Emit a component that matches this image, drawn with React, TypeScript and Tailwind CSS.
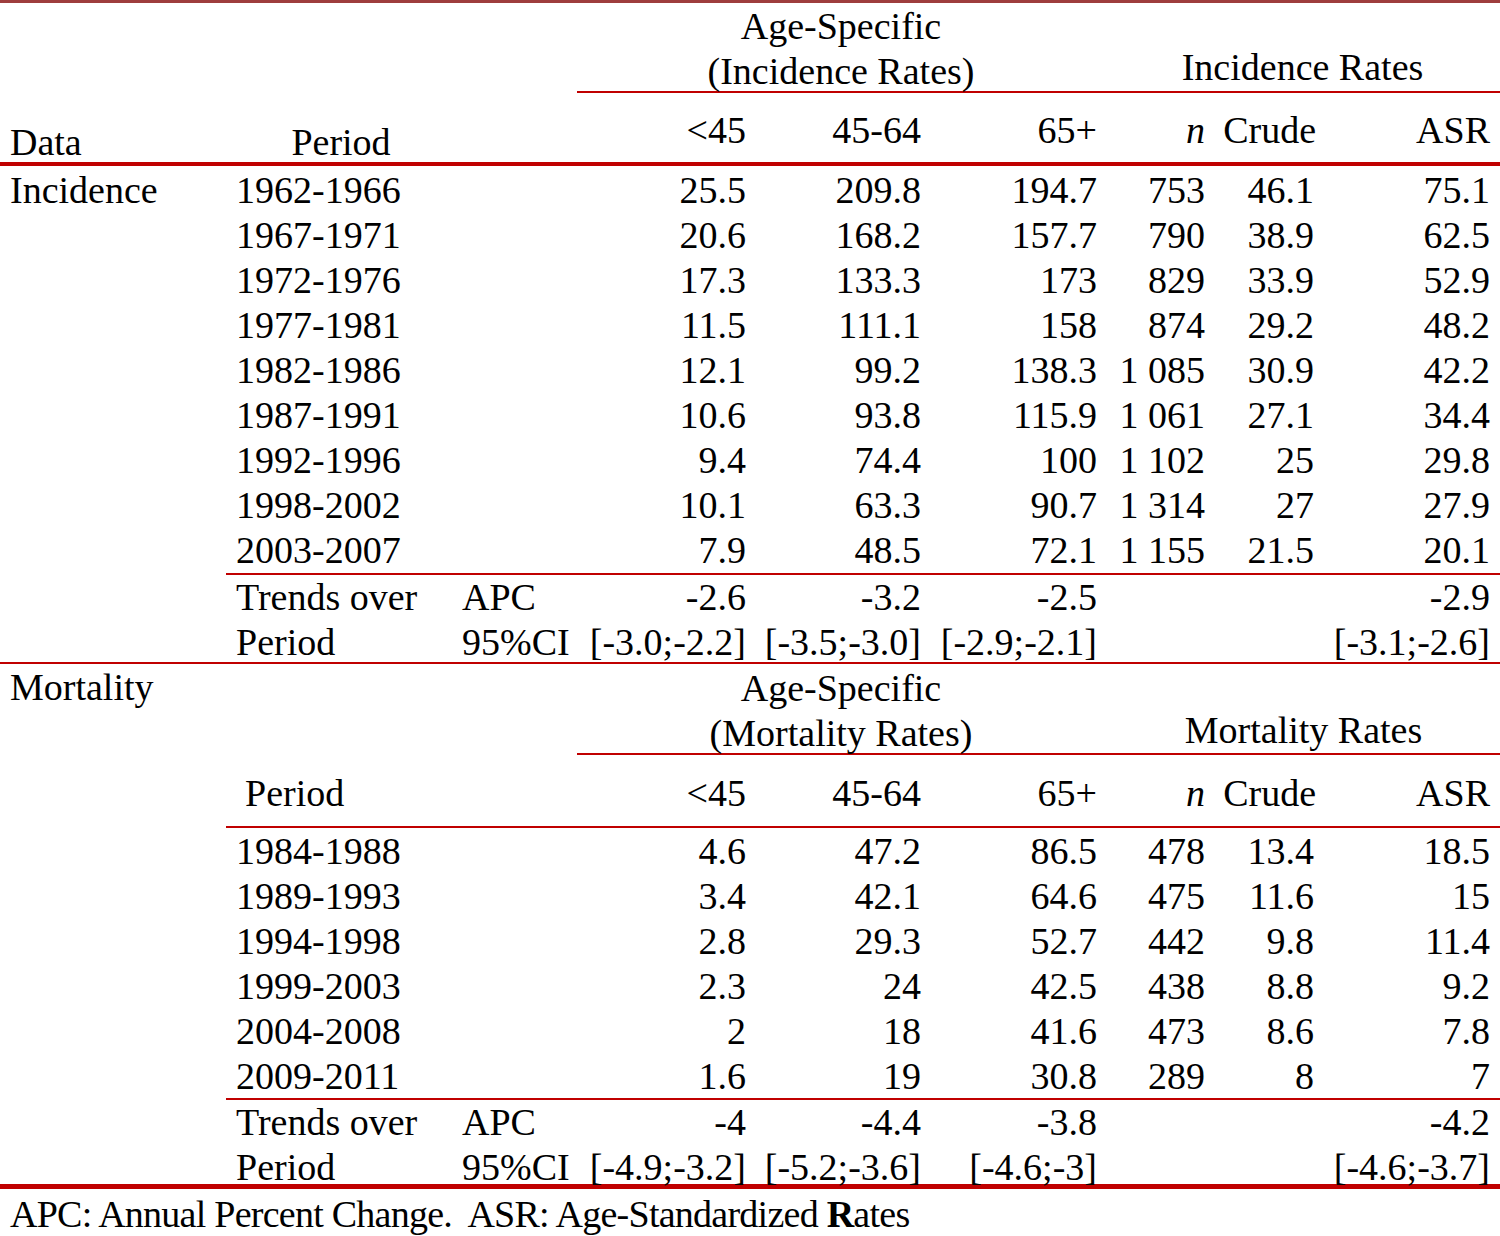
import React from "react";

const COLS =
  "grid grid-cols-[226px_226px_125px_177px_175px_176px_108px_109px_178px]";

type Vals = [string, string, string, string, string, string];

const incidence: [string, Vals][] = [
  ["1962-1966", ["25.5", "209.8", "194.7", "753", "46.1", "75.1"]],
  ["1967-1971", ["20.6", "168.2", "157.7", "790", "38.9", "62.5"]],
  ["1972-1976", ["17.3", "133.3", "173", "829", "33.9", "52.9"]],
  ["1977-1981", ["11.5", "111.1", "158", "874", "29.2", "48.2"]],
  ["1982-1986", ["12.1", "99.2", "138.3", "1 085", "30.9", "42.2"]],
  ["1987-1991", ["10.6", "93.8", "115.9", "1 061", "27.1", "34.4"]],
  ["1992-1996", ["9.4", "74.4", "100", "1 102", "25", "29.8"]],
  ["1998-2002", ["10.1", "63.3", "90.7", "1 314", "27", "27.9"]],
  ["2003-2007", ["7.9", "48.5", "72.1", "1 155", "21.5", "20.1"]],
];

const mortality: [string, Vals][] = [
  ["1984-1988", ["4.6", "47.2", "86.5", "478", "13.4", "18.5"]],
  ["1989-1993", ["3.4", "42.1", "64.6", "475", "11.6", "15"]],
  ["1994-1998", ["2.8", "29.3", "52.7", "442", "9.8", "11.4"]],
  ["1999-2003", ["2.3", "24", "42.5", "438", "8.8", "9.2"]],
  ["2004-2008", ["2", "18", "41.6", "473", "8.6", "7.8"]],
  ["2009-2011", ["1.6", "19", "30.8", "289", "8", "7"]],
];

function ValueCells({ vals }: { vals: string[] }) {
  return (
    <>
      {vals.map((v, i) => (
        <div
          key={i}
          className={
            i === 5
              ? "text-right pr-[10px] whitespace-nowrap"
              : "text-right pr-[8px] whitespace-nowrap"
          }
        >
          {v}
        </div>
      ))}
    </>
  );
}

function Row({
  first,
  second,
  third,
  vals,
  h,
}: {
  first?: string;
  second?: string;
  third?: string;
  vals: string[];
  h: string;
}) {
  return (
    <div className={`${COLS} ${h}`}>
      <div className="pl-[10px] whitespace-nowrap">{first}</div>
      <div className="pl-[10px] whitespace-nowrap">{second}</div>
      <div className="pl-[10px] whitespace-nowrap">{third}</div>
      <ValueCells vals={vals} />
    </div>
  );
}

function RedRule({ cls }: { cls: string }) {
  return <div className={cls} />;
}

export default function App() {
  return (
    <div className="w-[1500px] h-[1236px] bg-white text-black text-[38px] leading-[45px] font-['Liberation_Serif',serif] overflow-hidden">
      <div className="h-[3px] bg-[#9e3d3d]" />

      {/* Incidence header A */}
      <div className={`${COLS} h-[88px]`}>
        <div className="col-span-3" />
        <div className="col-span-3 text-center pt-[1px]">
          <div>Age-Specific</div>
          <div>(Incidence Rates)</div>
        </div>
        <div className="col-span-3 text-center pt-[42px]">Incidence Rates</div>
      </div>
      <RedRule cls="h-[2px] ml-[577px] bg-[#c00000]" />

      {/* Incidence header B */}
      <div className={`${COLS} h-[69px]`}>
        <div className="pl-[10px] pt-[27px]">Data</div>
        <div className="text-center pt-[27px] pl-[4px]">Period</div>
        <div />
        <div className="text-right pr-[8px] pt-[15px]">&lt;45</div>
        <div className="text-right pr-[8px] pt-[15px]">45-64</div>
        <div className="text-right pr-[8px] pt-[15px]">65+</div>
        <div className="text-right pr-[8px] pt-[15px] italic">n</div>
        <div className="text-right pr-[6px] pt-[15px]">Crude</div>
        <div className="text-right pr-[10px] pt-[15px]">ASR</div>
      </div>
      <RedRule cls="h-[4px] bg-[#c00000]" />

      {/* Incidence rows */}
      <div className="h-[407px] pt-[2px]">
        {incidence.map(([p, v], i) => (
          <Row
            key={p}
            first={i === 0 ? "Incidence" : undefined}
            second={p}
            vals={v}
            h="h-[45px]"
          />
        ))}
      </div>
      <RedRule cls="h-[2px] ml-[226px] bg-[#c00000]" />
      <div className="h-[87px]">
        <Row second="Trends over" third="APC" vals={["-2.6", "-3.2", "-2.5", "", "", "-2.9"]} h="h-[45px]" />
        <Row
          second="Period"
          third="95%CI"
          vals={["[-3.0;-2.2]", "[-3.5;-3.0]", "[-2.9;-2.1]", "", "", "[-3.1;-2.6]"]}
          h="h-[42px]"
        />
      </div>
      <RedRule cls="h-[2px] bg-[#c00000]" />

      {/* Mortality header A */}
      <div className={`${COLS} h-[89px]`}>
        <div className="pl-[10px] pt-[1px]">Mortality</div>
        <div className="col-span-2" />
        <div className="col-span-3 text-center pt-[2px]">
          <div>Age-Specific</div>
          <div>(Mortality Rates)</div>
        </div>
        <div className="col-span-3 text-center pt-[44px] pl-[2px]">Mortality Rates</div>
      </div>
      <RedRule cls="h-[2px] ml-[577px] bg-[#c00000]" />

      {/* Mortality header B */}
      <div className={`${COLS} h-[71px]`}>
        <div />
        <div className="pl-[19px] pt-[16px]">Period</div>
        <div />
        <div className="text-right pr-[8px] pt-[16px]">&lt;45</div>
        <div className="text-right pr-[8px] pt-[16px]">45-64</div>
        <div className="text-right pr-[8px] pt-[16px]">65+</div>
        <div className="text-right pr-[8px] pt-[16px] italic">n</div>
        <div className="text-right pr-[6px] pt-[16px]">Crude</div>
        <div className="text-right pr-[10px] pt-[16px]">ASR</div>
      </div>
      <RedRule cls="h-[2px] ml-[226px] bg-[#c00000]" />

      {/* Mortality rows */}
      <div className="h-[270px] pt-[1px]">
        {mortality.map(([p, v]) => (
          <Row key={p} second={p} vals={v} h="h-[45px]" />
        ))}
      </div>
      <RedRule cls="h-[2px] ml-[226px] bg-[#c00000]" />
      <div className="h-[84px]">
        <Row second="Trends over" third="APC" vals={["-4", "-4.4", "-3.8", "", "", "-4.2"]} h="h-[45px]" />
        <Row
          second="Period"
          third="95%CI"
          vals={["[-4.9;-3.2]", "[-5.2;-3.6]", "[-4.6;-3]", "", "", "[-4.6;-3.7]"]}
          h="h-[39px]"
        />
      </div>
      <RedRule cls="h-[5px] bg-[#c00000]" />

      <div className="pl-[10px] pt-[3px] whitespace-pre tracking-[-0.75px]">
        APC: Annual Percent Change.  ASR: Age-Standardized <b>R</b>ates
      </div>
    </div>
  );
}
